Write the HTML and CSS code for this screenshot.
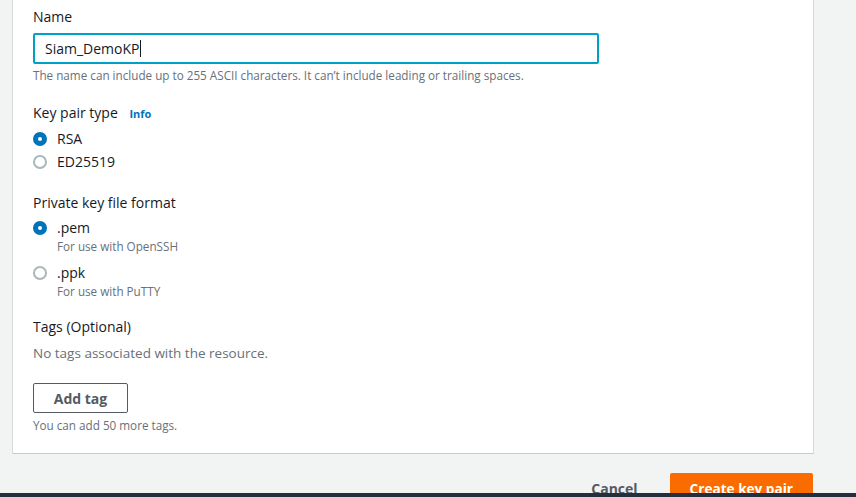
FILE: index.html
```html
<!DOCTYPE html>
<html>
<head>
<meta charset="utf-8">
<link rel="stylesheet" href="styles.css">
</head>
<body>
<div class="page">
  <div class="panel">
    <div class="label">Name</div>
    <div class="input"><span class="value">Siam_DemoKP</span><span class="caret"></span></div>
    <div class="hint">The name can include up to 255 ASCII characters. It can’t include leading or trailing spaces.</div>

    <div class="label section">Key pair type <span class="info">Info</span></div>
    <div class="radios">
      <div class="radio"><span class="dot on"></span><span class="rlabel">RSA</span></div>
      <div class="radio"><span class="dot"></span><span class="rlabel">ED25519</span></div>
    </div>

    <div class="label section">Private key file format</div>
    <div class="radios fmt">
      <div class="radio"><span class="dot on"></span><div><div class="rlabel">.pem</div><div class="desc">For use with OpenSSH</div></div></div>
      <div class="radio"><span class="dot"></span><div><div class="rlabel">.ppk</div><div class="desc">For use with PuTTY</div></div></div>
    </div>

    <div class="label section tags">Tags (Optional)</div>
    <div class="notags">No tags associated with the resource.</div>
    <button class="btn-add">Add tag</button>
    <div class="hint more">You can add 50 more tags.</div>
  </div>
  <div class="actions">
    <button class="btn-cancel">Cancel</button>
    <button class="btn-primary">Create key pair</button>
  </div>
</div>
<div class="bottombar"></div>
</body>
</html>
```
FILE: styles.css
```css
* { box-sizing: border-box; }
html, body { margin: 0; padding: 0; }
body {
  background: #f2f3f3;
  font-family: "Open Sans", "Noto Sans", sans-serif;
  color: #16191f;
  height: 497px;
  overflow: hidden;
}
.page { padding-left: 12px; }
.panel {
  width: 802px;
  height: 454px;
  background: #fff;
  border-left: 1px solid #d5dbdb;
  border-right: 1px solid #d5dbdb;
  border-bottom: 1px solid #c6cccc;
  padding: 6px 0 0 20px;
}
.label { font-size: 14px; line-height: 22px; }
.section { margin-top: 19px; }
.section.tags { margin-top: 17px; }
.info { color: #0073bb; font-weight: 700; font-size: 11px; margin-left: 8px; }
.input {
  margin-top: 5px;
  width: 566px;
  height: 31px;
  border: 2px solid #00a1c9;
  border-radius: 2px;
  padding-left: 10px;
  display: flex;
  align-items: center;
  font-size: 14px;
}
.caret { display: inline-block; width: 1px; height: 17px; background: #16191f; margin-left: 1px; }
.hint { font-size: 11.7px; line-height: 16px; color: #687078; margin-top: 3px; }
.radios { margin-top: 3px; display: flex; flex-direction: column; gap: 1px; }
.radio { display: flex; align-items: flex-start; gap: 10px; }
.rlabel { font-size: 14px; line-height: 22px; }
.dot {
  width: 14px; height: 14px; border-radius: 50%;
  border: 2px solid #aab7b8; background: #fff;
  margin-top: 4px; flex: none;
}
.dot.on { border: 5px solid #0073bb; }
.section + .fmt { margin-top: 4px; gap: 9px; }
.fmt .rlabel { line-height: 20px; }
.fmt .dot { margin-top: 3px; }
.desc { font-size: 11.7px; line-height: 16px; color: #687078; }
.notags { margin-top: 4px; font-size: 13.5px; line-height: 22px; color: #687078; }
.btn-add {
  margin-top: 19px;
  width: 95px; height: 30px;
  background: #fff;
  border: 1px solid #545b64;
  border-radius: 2px;
  color: #545b64;
  font-family: inherit;
  font-weight: 700;
  font-size: 14px;
  display: block;
}
.more { margin-top: 4px; }
.actions {
  width: 801px;
  margin-top: 19px;
  display: flex;
  justify-content: flex-end;
  gap: 12px;
}
.btn-cancel {
  background: none; border: none;
  color: #545b64; font-family: inherit; font-weight: 700; font-size: 14px;
  height: 30px; padding: 0 20px;
  white-space: nowrap;
}
.btn-primary {
  background: #fa6c00; border: none; border-radius: 2px;
  color: #fff; font-family: inherit; font-weight: 700; font-size: 13.6px;
  height: 30px; padding: 0 20px;
  white-space: nowrap;
}
.bottombar {
  position: fixed; left: 0; right: 0; bottom: 0;
  height: 4px; background: #232f3e;
}
```
